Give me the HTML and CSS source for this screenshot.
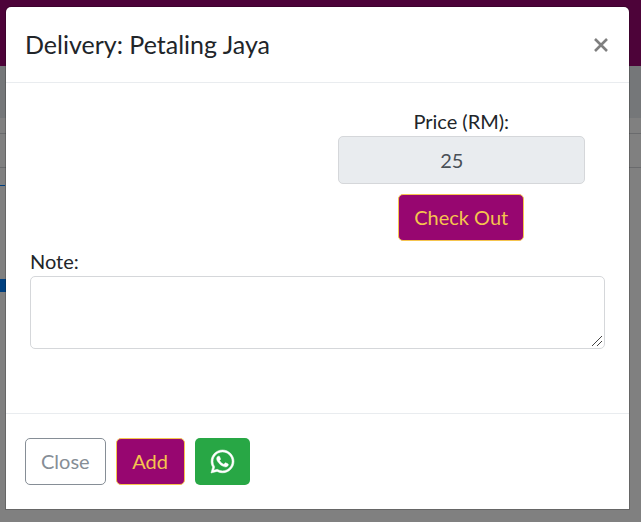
FILE: index.html
```
<!DOCTYPE html>
<html lang="en">
<head>
<meta charset="UTF-8">
<meta name="viewport" content="width=device-width, initial-scale=1">
<title>Delivery: Petaling Jaya</title>
<link rel="stylesheet" href="styles.css">
</head>
<body>
<div class="page">
  <div class="navbar"></div>
  <div class="toolbar"></div>
  <div class="row row-top"></div>
  <div class="row row-head"></div>
  <div class="link-line"></div>
  <div class="page-tab"></div>
</div>

<div class="backdrop">
  <div class="modal" role="dialog" aria-labelledby="modalTitle">
    <div class="modal-header">
      <h5 class="modal-title" id="modalTitle">Delivery: Petaling Jaya</h5>
      <button type="button" class="close" aria-label="Close">
        <svg class="close-icon" viewBox="0 0 14 14"><path d="M1 1 13 13M13 1 1 13"/></svg>
      </button>
    </div>
    <form class="modal-body">
      <div class="price">
        <label for="price">Price (RM):</label>
        <input type="text" class="form-control price-input" id="price" value="25" readonly>
        <button type="button" class="btn btn-main">Check Out</button>
      </div>
      <div class="note">
        <label for="note">Note:</label>
        <textarea class="form-control note-input" id="note"></textarea>
      </div>
    </form>
    <div class="modal-footer">
      <button type="button" class="btn btn-outline">Close</button>
      <button type="button" class="btn btn-main">Add</button>
      <button type="button" class="btn btn-success" aria-label="WhatsApp">
        <svg class="wa-icon" viewBox="0 32 448 448"><path d="M380.9 97.1C339 55.1 283.2 32 223.9 32c-122.4 0-222 99.6-222 222 0 39.1 10.2 77.3 29.6 111L0 480l117.7-30.9c32.4 17.7 68.9 27 106.1 27h.1c122.3 0 224.1-99.6 224.1-222 0-59.3-25.2-115-67.1-157zm-157 341.6c-33.2 0-65.7-8.9-94-25.7l-6.7-4-69.8 18.3L72 359.2l-4.4-7c-18.5-29.4-28.2-63.3-28.2-98.2 0-101.7 82.8-184.5 184.6-184.5 49.3 0 95.6 19.2 130.4 54.1 34.8 34.9 56.2 81.2 56.1 130.5 0 101.8-84.9 184.6-186.6 184.6zm101.2-138.2c-5.5-2.8-32.8-16.2-37.9-18-5.1-1.9-8.8-2.8-12.5 2.8-3.7 5.6-14.3 18-17.6 21.8-3.2 3.7-6.5 4.2-12 1.4-32.6-16.3-54-29.1-75.5-66-5.7-9.8 5.7-9.1 16.3-30.3 1.8-3.7.9-6.9-.5-9.7-1.4-2.8-12.5-30.1-17.1-41.2-4.5-10.8-9.1-9.3-12.5-9.5-3.2-.2-6.9-.2-10.6-.2-3.7 0-9.7 1.4-14.8 6.9-5.1 5.6-19.4 19-19.4 46.3 0 27.3 19.9 53.7 22.6 57.4 2.8 3.7 39.1 59.7 94.8 83.8 35.2 15.2 49 16.5 66.6 13.9 10.7-1.6 32.8-13.4 37.4-26.4 4.6-13 4.6-24.1 3.2-26.4-1.3-2.5-5-3.9-10.5-6.6z"/></svg>
      </button>
    </div>
  </div>
</div>
</body>
</html>
```
FILE: styles.css
```
:root{
  --main:#970670;--gold:#f5c44e;--text:#212529;--border:#d5d7da;--line:#e9ecef
}
*{box-sizing:border-box;margin:0;padding:0}
body{font-family:Lato,"Liberation Sans",sans-serif;font-size:20px;line-height:30px;color:var(--text);background:#808080}

/* page behind the dialog */
.page{min-height:100vh;overflow:hidden}
.navbar{height:66px;background:#4d0339}
.toolbar{height:52px;background:#757779}
.row{border-bottom:1px solid #6a6b6d}
.row-top{height:16px}
.row-head{height:34px}
.link-line{width:5px;height:1px;margin-top:17px;background:#00407f}
.page-tab{width:12px;height:13px;margin-top:93px;background:#004080;border-radius:0 0 5px 0}

.backdrop{position:absolute;top:0;left:0;width:100%;padding:7px 12px 12px 6px}
.modal{background:#fff;border-radius:5px 5px 0 0;box-shadow:0 0 0 1px rgba(0,0,0,.2)}
.modal-header{display:flex;justify-content:space-between;align-items:center;padding:19px;border-bottom:1px solid var(--line)}
.modal-title{font-size:25px;font-weight:400;line-height:37px}
.close{display:flex;padding:2px;border:0;background:none;cursor:pointer}
.close-icon{width:14px;height:14px;fill:none;stroke:#7f7f7f;stroke-width:2.6}
.modal-body{padding:23px 24px 64px}
label{display:block}
.form-control{display:block;width:100%;padding:8px 15px;border:1px solid var(--border);border-radius:5px;background:#fff;color:#495057;font:inherit}
.price{width:50%;margin-left:auto;padding:0 20px;text-align:center}
.price-input{height:48px;margin-bottom:10px;padding-right:34px;background:#e9ecef;text-align:center}
.note{margin-top:5px}
.note-input{height:73px;resize:vertical}
.note-input::-webkit-resizer{background:url("data:image/svg+xml,%3Csvg xmlns='http://www.w3.org/2000/svg' width='15' height='15'%3E%3Cpath d='M3 13 13 3M8 13l5-5' stroke='%23444' fill='none'/%3E%3C/svg%3E") no-repeat right bottom}
.btn{padding:8px 15px;border:1px solid transparent;border-radius:5px;font:inherit;line-height:29px;cursor:pointer}
.btn-main{min-width:69px;background:var(--main);border-color:var(--gold);color:var(--gold)}
.btn-outline{background:#fff;border-color:#868e96;color:#868e96}
.btn-success{display:flex;align-items:center;background:#28a745;color:#fff}
.modal-footer{display:flex;flex-wrap:wrap;gap:10px;padding:24px 19px;border-top:1px solid var(--line)}
.wa-icon{width:23px;height:23px;overflow:visible;fill:currentColor;stroke:currentColor;stroke-width:10}
```
